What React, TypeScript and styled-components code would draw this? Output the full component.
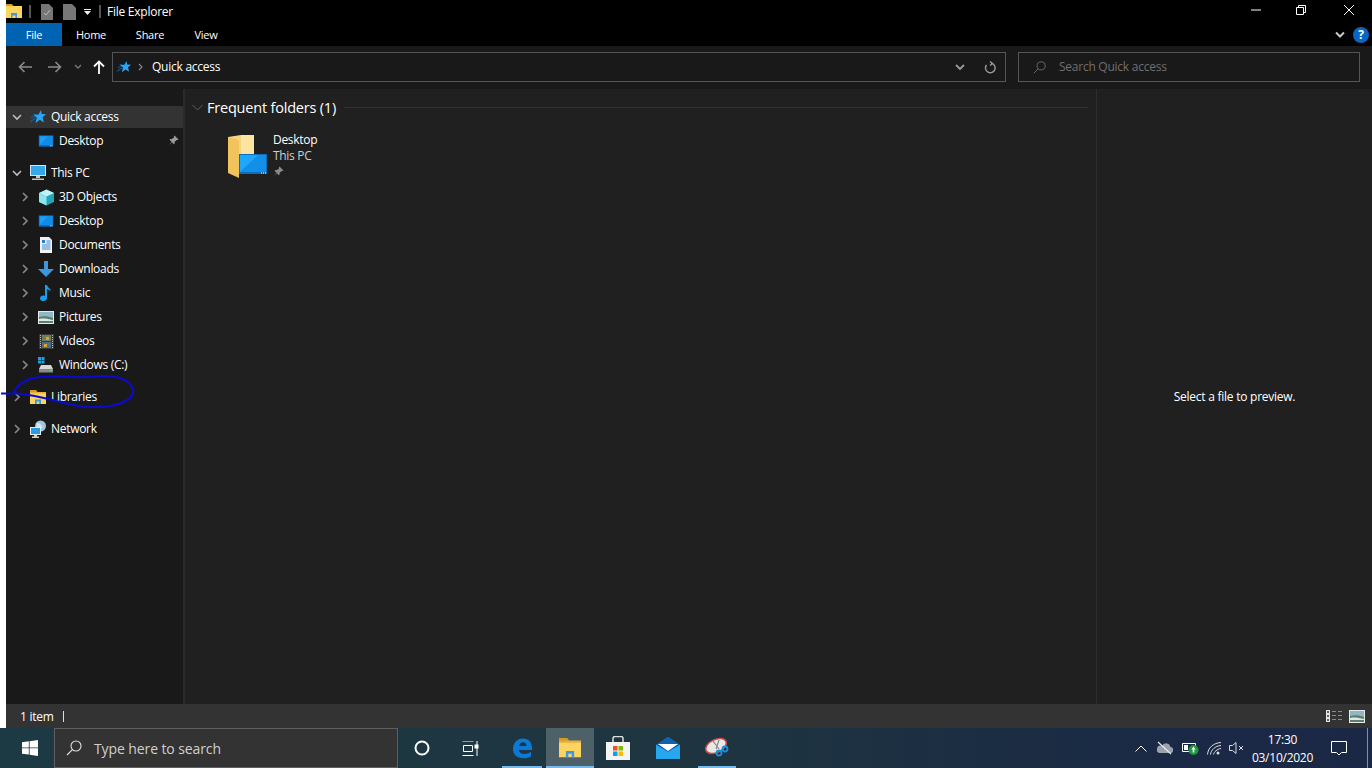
import React from 'react';
import styled, { createGlobalStyle } from 'styled-components';

const Global = createGlobalStyle`
  html, body { margin: 0; padding: 0; background: #fff; }
  body { font-family: "Open Sans", "Liberation Sans", sans-serif; font-size: 12px; letter-spacing: -0.25px; color: #fff; overflow: hidden; }
  * { box-sizing: border-box; }
`;

const Screen = styled.div`
  position: relative; width: 1372px; height: 768px; display: flex; flex-direction: column; overflow: hidden;
`;
const Win = styled.div`
  margin-left: 6px; height: 728px; display: flex; flex-direction: column; background: #191919;
`;
const TitleBar = styled.div`
  height: 23px; background: #000; display: flex; align-items: center; flex: none;
`;
const Qat = styled.div`
  width: 101px; height: 23px; display: flex; align-items: center; flex: none;
`;
const QatFolder = styled.svg`
  flex: none; margin-top: -1px;
`;
const QatSep = styled.span<{ $ml: number }>`
  width: 2px; height: 13px; margin-left: ${p => p.$ml}px; background: #555; flex: none;
`;
const QatSlot = styled.svg<{ $ml: number }>`
  margin-left: ${p => p.$ml}px; flex: none; display: block;
`;
const TitleText = styled.span`
  font-size: 12px; line-height: 23px;
`;
const WinButtons = styled.div`
  margin-left: auto; display: flex; height: 23px;
`;
const WinBtn = styled.div<{ $w: number }>`
  width: ${p => p.$w}px; height: 20px; display: flex; align-items: center; justify-content: center;
`;
const Ribbon = styled.div`
  height: 23px; background: #000; display: flex; align-items: stretch; flex: none;
`;
const FileTab = styled.div`
  width: 56px; background: #0063b1; display: flex; align-items: center; justify-content: center; font-size: 11px;
`;
const Tab = styled.div<{ $w: number }>`
  width: ${p => p.$w}px; display: flex; align-items: center; justify-content: center; font-size: 11px;
`;
const RibbonRight = styled.div`
  margin-left: auto; display: flex; align-items: center; gap: 8px; padding-right: 3px;
`;
const Help = styled.div`
  width: 16px; height: 16px; border-radius: 50%; background: #0a66c2; color: #fff; font-weight: 700; font-size: 12px; display: flex; align-items: center; justify-content: center;
`;
const AddressRow = styled.div`
  height: 43px; flex: none; display: flex; align-items: flex-start; padding-top: 6px; background: #191919;
`;
const NavButtons = styled.div`
  width: 106px; height: 30px; flex: none; display: flex; align-items: center;
`;
const NavSlot = styled.div<{ $w: number }>`
  width: ${p => p.$w}px; display: flex; justify-content: center; flex: none;
`;
const Address = styled.div`
  width: 894px; height: 30px; border: 1px solid #555; display: flex; align-items: center; padding-left: 4px;
`;
const CrumbSep = styled.svg`
  margin-left: 7px; flex: none;
`;
const Crumb = styled.span`
  font-size: 12px; margin: -2px 0 0 8px;
`;
const AddrEnd = styled.div`
  margin-left: auto; display: flex; align-items: center; height: 100%;
`;
const AddrBtn = styled.div`
  width: 30px; height: 100%; display: flex; align-items: center; justify-content: center;
`;
const SearchField = styled.div`
  width: 342px; height: 30px; margin-left: 12px; border: 1px solid #555; display: flex; align-items: center; padding-left: 14px; color: #6f6f6f; font-size: 12px; gap: 13px;
`;
const SearchLabel = styled.span`
  margin-top: -2px;
`;
const Body = styled.div`
  flex: 1; display: flex; min-height: 0;
`;
const Sidebar = styled.div`
  width: 177px; flex: none; padding-top: 16px; background: #191919;
`;
const Divider = styled.div`
  width: 2px; background: #2b2b2b; flex: none;
`;
const Row = styled.div<{ $indent: number; $active?: boolean; $gap?: boolean }>`
  height: 24px; display: flex; align-items: center; position: relative;
  padding-left: ${p => p.$indent}px;
  margin-top: ${p => (p.$gap ? 8 : 0)}px;
  background: ${p => (p.$active ? 'linear-gradient(#191919 1px, #333 1px, #333 23px, #191919 23px)' : 'transparent')};
`;
const Caret = styled.div`
  width: 12px; height: 12px; display: flex; align-items: center; justify-content: center; flex: none;
`;
const RowIcon = styled.div`
  width: 20px; height: 20px; display: flex; align-items: center; justify-content: center; flex: none; margin-left: 5px;
`;
const RowLabel = styled.span`
  margin: -2px 0 0 3px; font-size: 12px; white-space: nowrap; letter-spacing: -0.3px;
`;
const RowPin = styled.div`
  position: absolute; right: 4px; top: 6px; display: flex;
`;
const Content = styled.div`
  flex: 1; background: #202020; padding: 9px 8px 0 7px; min-width: 0;
`;
const GroupHead = styled.div`
  display: flex; align-items: center; height: 18px;
`;
const GroupTitle = styled.span`
  font-size: 14.5px; margin-left: 4px; letter-spacing: -0.2px;
`;
const GroupLine = styled.div`
  flex: 1; height: 1px; background: #333; margin-left: 8px;
`;
const Tile = styled.div`
  display: flex; margin: 19px 0 0 36px;
`;
const TileFolder = styled.svg`
  flex: none;
`;
const TileText = styled.div`
  margin: -3px 0 0 5px; display: flex; flex-direction: column; line-height: 16px; font-size: 12px; letter-spacing: -0.3px;
`;
const TileSub = styled.span`
  color: #cfcfcf;
`;
const TilePin = styled.div`
  margin-top: 2px; display: flex;
`;
const Preview = styled.div`
  width: 276px; flex: none; background: #202020; border-left: 1px solid #2e2e2e; display: flex; align-items: center; justify-content: center; font-size: 12px;
`;
const PreviewText = styled.span`
  margin-top: -1px;
`;
const StatusBar = styled.div`
  height: 24px; flex: none; background: #333; display: flex; align-items: center; padding-left: 14px; font-size: 12px;
`;
const StatusSep = styled.span`
  width: 1px; height: 11px; background: #ddd; margin-left: 9px;
`;
const StatusRight = styled.div`
  margin-left: auto; display: flex; align-items: center; gap: 7px; padding-right: 7px;
`;
const Taskbar = styled.div`
  height: 40px; flex: none; display: flex; background: linear-gradient(90deg, #1c3a44 0%, #1e3540 50%, #1a2945 85%, #1a2845 100%);
`;
const Start = styled.div`
  width: 54px; display: flex; align-items: center; justify-content: center; padding-left: 6px;
`;
const TaskSearch = styled.div`
  width: 344px; height: 40px; background: #333; border: 1px solid #5f5f5f; display: flex; align-items: center; padding-left: 11px; gap: 12px; font-size: 14px; letter-spacing: -0.1px; color: #cfcfcf;
`;
const TaskIcon = styled.div<{ $w?: number; $open?: boolean; $active?: boolean; $ml?: number }>`
  width: ${p => p.$w ?? 48}px; height: 40px; flex: none; display: flex; align-items: center; justify-content: center; position: relative;
  margin-left: ${p => p.$ml ?? 0}px;
  background: ${p => (p.$active ? '#4e6068' : 'transparent')};
  &::after {
    content: ''; position: absolute; bottom: 0; height: 2px; background: #76b9ed;
    left: ${p => (p.$active ? 0 : 4)}px; right: ${p => (p.$active ? 0 : 4)}px;
    display: ${p => (p.$open ? 'block' : 'none')};
  }
`;
const Tray = styled.div`
  margin-left: auto; display: flex; align-items: center; height: 40px;
`;
const TraySlot = styled.div<{ $w: number }>`
  width: ${p => p.$w}px; display: flex; align-items: center; justify-content: center; flex: none;
`;
const Clock = styled.div`
  width: 71px; display: flex; flex-direction: column; align-items: center; font-size: 12px; line-height: 18px; padding-top: 2px;
`;
const ShowDesktop = styled.div`
  width: 1px; height: 40px; background: #7f8ea0; margin: 0 4px 0 7px;
`;
const Scribble = styled.svg`
  position: absolute; left: 0; top: 370px; pointer-events: none;
`;

const Chevron = ({ open, c = '#9a9a9a' }: { open?: boolean; c?: string }) => (
  <svg width="10" height="10" viewBox="0 0 10 10" fill="none" stroke={c} strokeWidth="1.6">
    {open ? <path d="M1 3l4 4 4-4" /> : <path d="M3 1l4 4-4 4" />}
  </svg>
);
const Star = ({ s = 16 }: { s?: number }) => (
  <svg width={s} height={s} viewBox="0 0 16 16">
    <path d="M0 13l5.500-4M1 8.500l4.500-1.500M3 5.500h3" stroke="#14609e" strokeWidth="1.200" />
    <path d="M11 1l.6 4 4.400.3-3.400 2.900 1.200 5.300-4-2.700-4.300 3.200 1.300-5.300L3.700 5.700l4.800-.3z" fill="#2aa5f5" />
  </svg>
);
const Screenish = ({ w = 20, h = 14 }: { w?: number; h?: number }) => (
  <svg width={w} height={h} viewBox="0 0 20 14">
    <rect x="1" y="0" width="18" height="14" fill="#0d6fc0" />
    <rect x="2" y="1" width="16" height="11" fill="#19a1f7" />
    <path d="M2 12L12 1h6v11z" fill="#0f8de6" />
    <path d="M15 13h1M17 13h1" stroke="#fff" strokeWidth="1" />
  </svg>
);
const Pin = ({ c = '#9a9a9a' }: { c?: string }) => (
  <svg width="11" height="11" viewBox="0 0 11 11">
    <path d="M6.500 0.500l4 4-1 .6-.8-.2L6.500 7l.2 1.500-.8.8-2-2L1 10l2.600-3.200-2.100-2.100.8-.8 1.500.2L6 2.400l-.2-.8z" fill={c} />
  </svg>
);
const Monitor = () => (
  <svg width="20" height="18" viewBox="0 0 20 18">
    <rect x="2" y="1" width="16" height="11" fill="#cfe6f5" />
    <rect x="3" y="2" width="14" height="9" fill="#35a8ea" />
    <path d="M8 12h4v2H8zM4 14.500h12v1.500H4z" fill="#c8c8c8" />
  </svg>
);
const Cube = () => (
  <svg width="17" height="17" viewBox="0 0 17 17">
    <path d="M8.500 0.500L16 4v9l-7.500 3.500L1 13V4z" fill="#24a4b4" />
    <path d="M8.500 0.500L16 4l-7.500 3.500L1 4z" fill="#bdf3f5" />
    <path d="M1 4l7.500 3.500v9L1 13z" fill="#8ce6ec" />
  </svg>
);
const Doc = () => (
  <svg width="14" height="16" viewBox="0 0 14 16">
    <path d="M1 0h9l3 3v13H1z" fill="#f2f2f2" />
    <path d="M3 3h3v3H3z" fill="#2a7fd0" />
    <path d="M7.500 4h4M7.500 6h4M3 8h8.500M3 10h8.500M3 12h8.500" stroke="#3b8fd8" strokeWidth="1" />
  </svg>
);
const DownArrow = () => (
  <svg width="16" height="16" viewBox="0 0 16 16">
    <path d="M6 0h4v8h6l-8 8-8-8h6z" fill="#3a96dd" />
  </svg>
);
const Music = () => (
  <svg width="12" height="16" viewBox="0 0 12 16">
    <path d="M5 0h2c.3 2.500 3.500 3 4 6.500-1-1.500-2.500-2-4-2.300V13c0 1.800-1.500 3-3.500 3S0 15 0 13.400C0 11.800 1.500 10.500 3.300 10.500c.6 0 1.200.1 1.700.4z" fill="#1a9ee8" />
  </svg>
);
const Picture = () => (
  <svg width="16" height="13" viewBox="0 0 16 13">
    <rect width="16" height="13" fill="#e8e8e8" />
    <rect x="1" y="1" width="14" height="11" fill="#8fb7c4" />
    <path d="M1 6c4-1 9-1 14 1v5H1z" fill="#5e7d6c" />
    <path d="M1 8c5-1 9 0 14 1v1H1z" fill="#dce8e6" />
  </svg>
);
const Film = () => (
  <svg width="15" height="15" viewBox="0 0 15 15">
    <rect width="15" height="15" fill="#3a3a3a" />
    <rect x="3" y="1" width="9" height="6" fill="#6f7e5a" />
    <rect x="3" y="8" width="9" height="6" fill="#4f6b8f" />
    <rect x="7" y="3" width="3" height="3" fill="#d5a52e" />
    <rect x="5" y="10" width="3" height="3" fill="#d5a52e" />
    <path d="M1.500 1v13M13.500 1v13" stroke="#bbb" strokeWidth="1" strokeDasharray="1 1" />
  </svg>
);
const Drive = () => (
  <svg width="16" height="16" viewBox="0 0 16 16">
    <path d="M0 0h3v3H0zM3.500 0h3v3h-3zM0 3.500h3v3H0zM3.500 3.500h3v3h-3z" fill="#1aa0e8" />
    <path d="M3 8h10l2 4H1z" fill="#d8d8d8" />
    <rect x="1" y="12" width="14" height="3.500" fill="#8a8a8a" />
    <rect x="12" y="13" width="2" height="1" fill="#5fe05f" />
  </svg>
);
const Folder = ({ s = 16 }: { s?: number }) => (
  <svg width={s} height={s * 0.875} viewBox="0 0 16 14">
    <path d="M0 0h6l1.500 2H0z" fill="#d89b1d" />
    <path d="M0 2h16v12H0z" fill="#fcd462" />
    <path d="M0 2h16v1.500H0z" fill="#e8b13c" />
    <path d="M5 14V9.500h6V14h-1.800v-2.500H6.800V14z" fill="#3b9ae0" />
  </svg>
);
const Globe = () => (
  <svg width="18" height="18" viewBox="0 0 18 18">
    <circle cx="11.500" cy="6" r="5.500" fill="#9fc6de" />
    <path d="M8 3c2 0 4 1 5 3s-1 3-3 3-3-2-2-6z" fill="#d5e8f2" />
    <rect x="1" y="7" width="11" height="8" fill="#e5eef3" />
    <rect x="2" y="8" width="9" height="6" fill="#2b9be6" />
    <path d="M5 15h3v1.500H5zM3 16.500h7V18H3z" fill="#cfcfcf" />
  </svg>
);
const Search = ({ c, s }: { c: string; s: number }) => (
  <svg width={s} height={s} viewBox="0 0 16 16" fill="none" stroke={c} strokeWidth="1.100">
    <circle cx="10" cy="6" r="5" />
    <path d="M6.400 9.600L1 15" />
  </svg>
);
const Arrow = styled.svg<{ $flip?: boolean }>`
  transform: ${p => (p.$flip ? 'scaleX(-1)' : 'none')};
`;
const Back = ({ c = '#8a8a8a', flip }: { c?: string; flip?: boolean }) => (
  <Arrow $flip={flip} width="14" height="12" viewBox="0 0 14 12" fill="none" stroke={c} strokeWidth="1.600">
    <path d="M14 6H1.500M6.500 1l-5 5 5 5" />
  </Arrow>
);

type NavItem = { icon: React.ReactNode; label: string; indent: number; open?: boolean; none?: boolean; gap?: boolean; active?: boolean; pin?: boolean };
const items: NavItem[] = [
  { icon: <Star />, label: 'Quick access', indent: 5, open: true, active: true },
  { icon: <Screenish w={16} h={12} />, label: 'Desktop', indent: 13, none: true, pin: true },
  { icon: <Monitor />, label: 'This PC', indent: 5, open: true, gap: true },
  { icon: <Cube />, label: '3D Objects', indent: 13 },
  { icon: <Screenish w={16} h={12} />, label: 'Desktop', indent: 13 },
  { icon: <Doc />, label: 'Documents', indent: 13 },
  { icon: <DownArrow />, label: 'Downloads', indent: 13 },
  { icon: <Music />, label: 'Music', indent: 13 },
  { icon: <Picture />, label: 'Pictures', indent: 13 },
  { icon: <Film />, label: 'Videos', indent: 13 },
  { icon: <Drive />, label: 'Windows (C:)', indent: 13 },
  { icon: <Folder />, label: 'Libraries', indent: 5, gap: true },
  { icon: <Globe />, label: 'Network', indent: 5, gap: true },
];

export default function App() {
  return (
    <Screen>
      <Global />
      <Win>
        <TitleBar>
          <Qat>
            <QatFolder width="16" height="14" viewBox="0 0 16 14">
              <path d="M0 0h6l1.500 2H0z" fill="#d89b1d" />
              <path d="M0 2h16v12H0z" fill="#fcd462" />
              <path d="M5 14V9h6v5H9.500v-2.500h-3V14z" fill="#3b9ae0" />
            </QatFolder>
            <QatSep $ml={7} />
            <QatSlot $ml={10} width="12" height="16" viewBox="0 0 12 16">
              <path d="M0 0h8l4 4v12H0z" fill="#777" />
              <path d="M3 9l2 2 4-5" stroke="#bbb" strokeWidth="1" fill="none" />
            </QatSlot>
            <QatSlot $ml={10} width="13" height="16" viewBox="0 0 13 16">
              <path d="M0 0h9l4 4v12H0z" fill="#777" />
            </QatSlot>
            <QatSlot $ml={8} width="7" height="6" viewBox="0 0 7 6">
              <path d="M0 0h7v1H0zM0 2h7L3.500 6z" fill="#eee" />
            </QatSlot>
            <QatSep $ml={8} />
          </Qat>
          <TitleText>File Explorer</TitleText>
          <WinButtons>
            <WinBtn $w={40}>
              <svg width="10" height="10" viewBox="0 0 10 10"><path d="M0 5h10" stroke="#fff" /></svg>
            </WinBtn>
            <WinBtn $w={50}>
              <svg width="10" height="10" viewBox="0 0 10 10" fill="none" stroke="#fff"><path d="M.5 2.500h7v7h-7zM2.500 2.500v-2h7v7h-2" /></svg>
            </WinBtn>
            <WinBtn $w={46}>
              <svg width="12" height="12" viewBox="0 0 12 12" stroke="#fff"><path d="M1 1l10 10M11 1L1 11" /></svg>
            </WinBtn>
          </WinButtons>
        </TitleBar>
        <Ribbon>
          <FileTab>File</FileTab>
          <Tab $w={58}>Home</Tab>
          <Tab $w={60}>Share</Tab>
          <Tab $w={52}>View</Tab>
          <RibbonRight>
            <svg width="10" height="8" viewBox="0 0 10 8" fill="none" stroke="#c8c8c8" strokeWidth="2"><path d="M1 1.500l4 4 4-4" /></svg>
            <Help>?</Help>
          </RibbonRight>
        </Ribbon>
        <AddressRow>
          <NavButtons>
            <NavSlot $w={38}><Back /></NavSlot>
            <NavSlot $w={22}><Back flip /></NavSlot>
            <NavSlot $w={24}><svg width="8" height="6" viewBox="0 0 8 6" fill="none" stroke="#777" strokeWidth="1.400"><path d="M1 1l3 3 3-3" /></svg></NavSlot>
            <NavSlot $w={18}>
              <svg width="12" height="14" viewBox="0 0 12 14" fill="none" stroke="#fff" strokeWidth="1.800"><path d="M6 14V1.500M1 6.500l5-5 5 5" /></svg>
            </NavSlot>
          </NavButtons>
          <Address>
            <Star s={14} />
            <CrumbSep width="6" height="8" viewBox="0 0 6 8" fill="none" stroke="#8a8a8a" strokeWidth="1.100"><path d="M1 1l3 3-3 3" /></CrumbSep>
            <Crumb>Quick access</Crumb>
            <AddrEnd>
              <AddrBtn><svg width="10" height="7" viewBox="0 0 10 7" fill="none" stroke="#9a9a9a" strokeWidth="1.800"><path d="M1 1l4 4 4-4" /></svg></AddrBtn>
              <AddrBtn>
                <svg width="12" height="13" viewBox="0 0 12 13" fill="none" stroke="#9a9a9a" strokeWidth="1.400"><path d="M7 2.200A4.800 4.800 0 1 1 2.500 4M6 .5L8.500 2.500 6 4.500" /></svg>
              </AddrBtn>
            </AddrEnd>
          </Address>
          <SearchField>
            <Search c="#6f6f6f" s={13} />
            <SearchLabel>Search Quick access</SearchLabel>
          </SearchField>
        </AddressRow>
        <Body>
          <Sidebar>
            {items.map(it => (
              <Row key={it.label + it.indent + (it.pin ? 'p' : '')} $indent={it.indent} $active={it.active} $gap={it.gap}>
                <Caret>{it.none ? null : <Chevron open={it.open} c={it.open ? '#bdbdbd' : '#8a8a8a'} />}</Caret>
                <RowIcon>{it.icon}</RowIcon>
                <RowLabel>{it.label}</RowLabel>
                {it.pin && <RowPin><Pin /></RowPin>}
              </Row>
            ))}
          </Sidebar>
          <Divider />
          <Content>
            <GroupHead>
              <svg width="11" height="7" viewBox="0 0 11 7" fill="none" stroke="#5e5e5e"><path d="M.5 1l5 5 5-5" /></svg>
              <GroupTitle>Frequent folders (1)</GroupTitle>
              <GroupLine />
            </GroupHead>
            <Tile>
              <TileFolder width="40" height="44" viewBox="0 0 40 44">
                <path d="M0 2l13-2h13v34H0z" fill="#f5d585" />
                <path d="M13 0h13v34H13z" fill="#fbe5a0" />
                <path d="M0 2l11 3v38l-11-5z" fill="#f0c45a" />
                <rect x="11" y="19" width="28" height="20" fill="#0e6db8" />
                <rect x="12" y="20" width="26" height="17" fill="#1ea7fd" />
                <path d="M12 37L30 20h8v17z" fill="#128fe8" />
                <path d="M33 38h1M35 38h1M37 38h1" stroke="#fff" />
              </TileFolder>
              <TileText>
                <span>Desktop</span>
                <TileSub>This PC</TileSub>
                <TilePin><Pin c="#8a8a8a" /></TilePin>
              </TileText>
            </Tile>
          </Content>
          <Preview><PreviewText>Select a file to preview.</PreviewText></Preview>
        </Body>
        <StatusBar>
          1 item
          <StatusSep />
          <StatusRight>
            <svg width="16" height="12" viewBox="0 0 16 12">
              <path d="M0 0h4v12H0z" fill="#e5e5e5" />
              <path d="M1 1h2v2H1zM1 5h2v2H1zM1 9h2v2H1z" fill="#666" />
              <path d="M6 1.500h4M12 1.500h4M6 5.500h4M12 5.500h4M6 9.500h4M12 9.500h4" stroke="#8a8a8a" />
            </svg>
            <Picture />
          </StatusRight>
        </StatusBar>
      </Win>
      <Taskbar>
        <Start>
          <svg width="16" height="16" viewBox="0 0 16 16" fill="#fff"><path d="M0 2.300L6.800 1.300V7.500H0zM7.600 1.200L16 0v7.500H7.600zM0 8.300h6.800v6.300L0 13.700zM7.600 8.300H16V16l-8.400-1.200z" /></svg>
        </Start>
        <TaskSearch>
          <Search c="#e0e0e0" s={16} />
          Type here to search
        </TaskSearch>
        <TaskIcon $w={48}>
          <svg width="16" height="16" viewBox="0 0 16 16" fill="none" stroke="#fff" strokeWidth="2"><circle cx="8" cy="8" r="6.500" /></svg>
        </TaskIcon>
        <TaskIcon $w={48}>
          <svg width="17" height="15" viewBox="0 0 17 15" fill="none" stroke="#fff"><path d="M.5 0h11M.5 14.500h11M1.500 4.500h9v6h-9zM15 0v15" /><rect x="13" y="4" width="3" height="3" fill="#fff" /></svg>
        </TaskIcon>
        <TaskIcon $w={48} $ml={4} $open>
          <svg width="20" height="21" viewBox="0 0 20 21">
            <path d="M1 11C1 5 5 .5 11 .5c5.500 0 9 3.500 9 9.500v2H7c.3 2.800 2.500 4 5 4 2.500 0 5-.7 7-2v4.500c-2 1.200-4.500 1.800-7.500 1.800C5 20.300 1 16.500 1 11zm6.200-3h7.300c0-2.200-1.300-3.700-3.500-3.700-2 0-3.500 1.500-3.800 3.700z" fill="#0c78d8" />
          </svg>
        </TaskIcon>
        <TaskIcon $w={48} $open $active><Folder s={22} /></TaskIcon>
        <TaskIcon $w={48}>
          <svg width="24" height="24" viewBox="0 0 24 24">
            <path d="M0 6h24v18H0z" fill="#f4f4f4" />
            <path d="M7 6V2.500C7 1.500 8 .5 9 .5h6c1 0 2 1 2 2V6" fill="none" stroke="#ddd" strokeWidth="1.500" />
            <rect x="7" y="10" width="4.500" height="4.500" fill="#f25022" />
            <rect x="12.500" y="10" width="4.500" height="4.500" fill="#7fba00" />
            <rect x="7" y="15.500" width="4.500" height="4.500" fill="#00a4ef" />
            <rect x="12.500" y="15.500" width="4.500" height="4.500" fill="#ffb900" />
          </svg>
        </TaskIcon>
        <TaskIcon $w={52}>
          <svg width="24" height="22" viewBox="0 0 24 22">
            <path d="M0 8L12 0l12 8v14H0z" fill="#1e9ae8" />
            <path d="M0 8L12 0l12 8-12 7z" fill="#0e62b0" />
            <path d="M2 7h20l-10 7z" fill="#fff" />
            <path d="M0 8l12 7 12-7v14H0z" fill="#27a7ee" />
          </svg>
        </TaskIcon>
        <TaskIcon $w={46} $open>
          <svg width="26" height="22" viewBox="0 0 24 22">
            <ellipse cx="11" cy="9" rx="11" ry="6.500" transform="rotate(-25 11 9)" fill="#e8e8e8" stroke="#c74a4a" strokeWidth="1.500" />
            <path d="M8 4l6 8M14 3l-3 9" stroke="#888" strokeWidth="1.200" />
            <circle cx="14" cy="16" r="2.500" fill="none" stroke="#1a8fdc" strokeWidth="1.800" />
            <circle cx="20" cy="12" r="2.500" fill="none" stroke="#1a8fdc" strokeWidth="1.800" />
          </svg>
        </TaskIcon>
        <Tray>
          <TraySlot $w={24}>
            <svg width="12" height="7" viewBox="0 0 12 7" fill="none" stroke="#fff"><path d="M.5 6.500L6 1l5.500 5.500" /></svg>
          </TraySlot>
          <TraySlot $w={24}>
            <svg width="16" height="14" viewBox="0 0 16 14">
              <path d="M2 12h11a3 3 0 0 0 .5-6A4.500 4.500 0 0 0 5 5a3.500 3.500 0 0 0-3 7z" fill="#9aa3ad" />
              <path d="M1 1l13 12" stroke="#e8e8e8" strokeWidth="1.200" />
            </svg>
          </TraySlot>
          <TraySlot $w={26}>
            <svg width="17" height="14" viewBox="0 0 17 14">
              <path d="M.5 2.500h13v8H.5z" fill="none" stroke="#fff" />
              <rect x="2" y="4" width="4" height="5" fill="#fff" />
              <circle cx="11.500" cy="9" r="5" fill="#1f9a3c" />
              <path d="M11.500 5.500l2 3h-1.200v3h-1.600v-3H9.500z" fill="#fff" />
            </svg>
          </TraySlot>
          <TraySlot $w={22}>
            <svg width="15" height="13" viewBox="0 0 15 13" fill="none" stroke="#ddd"><path d="M.5 12.500C1 6 6 1 14 .5M3.500 12.500C4 8 8 4 14 3.500M6.500 12.500C7 10 10 7 14 6.500" /><circle cx="11" cy="11" r="1.500" fill="#ddd" stroke="none" /></svg>
          </TraySlot>
          <TraySlot $w={22}>
            <svg width="15" height="12" viewBox="0 0 15 12" fill="none" stroke="#ddd"><path d="M.5 3.500h3L7 .5v11l-3.500-3h-3zM10 4l4 4M14 4l-4 4" /></svg>
          </TraySlot>
          <Clock>
            <span>17:30</span>
            <span>03/10/2020</span>
          </Clock>
          <TraySlot $w={42}>
            <svg width="16" height="15" viewBox="0 0 16 15" fill="none" stroke="#fff"><path d="M.5.500h15v11h-5L8 14l-2.500-2.500h-5z" /></svg>
          </TraySlot>
          <ShowDesktop />
        </Tray>
      </Taskbar>
      <Scribble width="140" height="50" viewBox="0 370 140 50" fill="none" stroke="#0a0ad2" strokeWidth="2">
        <path d="M1 393.500L15 393.300 C25 394 45 398 60 402 C75 406 95 409 110 406 C125 403 134 398 133 390 C131 381 120 375 100 376 C90 377 85 378 75 377 C60 376 45 376 33 378 C24 380 15 387 14 394" />
      </Scribble>
    </Screen>
  );
}
